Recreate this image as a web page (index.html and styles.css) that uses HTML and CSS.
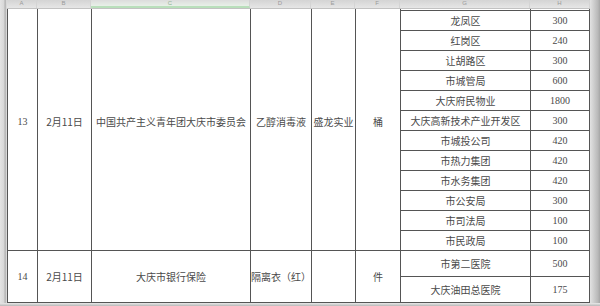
FILE: index.html
```html
<!DOCTYPE html>
<html lang="zh">
<head>
<meta charset="utf-8">
<title>物资捐赠表</title>
<link rel="stylesheet" href="styles.css">
</head>
<body>
<div class="window">
  <div class="main">
    <div class="gutter"></div>
    <div class="sheet">
      <div class="colhead">
        <span class="ch ch-a">A</span><span class="ch ch-b">B</span><span class="ch ch-c active">C</span><span class="ch ch-d">D</span><span class="ch ch-e">E</span><span class="ch ch-f">F</span><span class="ch ch-g">G</span><span class="ch ch-h">H</span>
      </div>
      <div class="viewport">
        <table class="grid">
          <colgroup>
            <col class="w-a"><col class="w-b"><col class="w-c"><col class="w-d"><col class="w-e"><col class="w-f"><col class="w-g"><col class="w-h">
          </colgroup>
          <tbody>
            <tr class="sub first">
              <td rowspan="13" class="num">13</td>
              <td rowspan="13">2月11日</td>
              <td rowspan="13">中国共产主义青年团大庆市委员会</td>
              <td rowspan="13">乙醇消毒液</td>
              <td rowspan="13">盛龙实业</td>
              <td rowspan="13">桶</td>
              <td></td><td class="num"></td>
            </tr>
            <tr class="sub"><td>龙凤区</td><td class="num">300</td></tr>
            <tr class="sub"><td>红岗区</td><td class="num">240</td></tr>
            <tr class="sub"><td>让胡路区</td><td class="num">300</td></tr>
            <tr class="sub"><td>市城管局</td><td class="num">600</td></tr>
            <tr class="sub"><td>大庆府民物业</td><td class="num">1800</td></tr>
            <tr class="sub"><td>大庆高新技术产业开发区</td><td class="num">300</td></tr>
            <tr class="sub"><td>市城投公司</td><td class="num">420</td></tr>
            <tr class="sub"><td>市热力集团</td><td class="num">420</td></tr>
            <tr class="sub"><td>市水务集团</td><td class="num">420</td></tr>
            <tr class="sub"><td>市公安局</td><td class="num">300</td></tr>
            <tr class="sub"><td>市司法局</td><td class="num">100</td></tr>
            <tr class="sub"><td>市民政局</td><td class="num">100</td></tr>
            <tr class="sub tall">
              <td rowspan="2" class="num">14</td>
              <td rowspan="2">2月11日</td>
              <td rowspan="2">大庆市银行保险</td>
              <td rowspan="2">隔离衣（红）</td>
              <td rowspan="2"></td>
              <td rowspan="2">件</td>
              <td>市第二医院</td><td class="num">500</td>
            </tr>
            <tr class="sub tall"><td>大庆油田总医院</td><td class="num">175</td></tr>
          </tbody>
        </table>
      </div>
    </div>
    <div class="edge"></div>
  </div>
  <div class="bottom"></div>
</div>
</body>
</html>
```
FILE: styles.css
```css
* { box-sizing: border-box; }
html, body { margin: 0; padding: 0; }
body {
  width: 600px;
  height: 306px;
  overflow: hidden;
  background: #d6d6d6;
  font-family: "Liberation Serif", "Noto Sans CJK SC", serif;
  color: #333;
}
.window {
  display: flex;
  flex-direction: column;
  width: 600px;
  height: 306px;
}
.main {
  display: flex;
  height: 303px;
}
.gutter {
  width: 7px;
  flex: none;
  background: linear-gradient(to right, #e4e4e4 0, #d8d8d8 4px, #b0b0b0 5px, #c4c4c4 6px, #ececec 7px);
}
.sheet {
  width: 583px;
  flex: none;
  display: flex;
  flex-direction: column;
  background: #fff;
}
.colhead {
  height: 9px;
  flex: none;
  display: flex;
  overflow: hidden;
  background: linear-gradient(to bottom, #d4d4d4, #e6e6e6);
  border-bottom: 1px solid #c2c2c2;
}
.ch {
  flex: none;
  font-family: "Liberation Sans", sans-serif;
  font-size: 6px;
  line-height: 7px;
  color: #9a9a9a;
  text-align: center;
  border-right: 1px solid #d4d4d4;
}
.ch.active {
  background: linear-gradient(to bottom, #dcdcdc, #e8f0e8);
  border-bottom: 2px solid #b9dfbb;
  color: #8fb593;
}
.ch-a { width: 30px; }
.ch-b { width: 54px; }
.ch-c { width: 159px; }
.ch-d { width: 61px; }
.ch-e { width: 44px; }
.ch-f { width: 45px; }
.ch-g { width: 130px; }
.ch-h { width: 60px; }
.viewport {
  flex: 1;
  overflow: hidden;
  background: #fff;
}
.grid {
  table-layout: fixed;
  border-collapse: collapse;
  width: 583px;
  margin-top: -16px;
  font-size: 10px;
}
.w-a { width: 30px; }
.w-b { width: 54px; }
.w-c { width: 159px; }
.w-d { width: 61px; }
.w-e { width: 44px; }
.w-f { width: 45px; }
.w-g { width: 130px; }
.w-h { width: 59px; }
.grid td {
  border: 1px solid #555;
  padding: 0;
  text-align: center;
  vertical-align: middle;
  white-space: nowrap;
  overflow: hidden;
  line-height: 12px;
  font-family: "Noto Sans CJK SC", sans-serif;
  color: #4a4a4a;
}
.grid td.num {
  font-family: "Liberation Serif", "Noto Sans CJK SC", serif;
  font-size: 10px;
}
.sub { height: 20px; }
.sub.first { height: 17px; }
.sub.tall { height: 26px; }
.edge {
  flex: 1;
  background: linear-gradient(to right, #e2e2e2 0, #cdcdcd 4px, #b8b8b8 8px, #a5a5a5 10px);
}
.bottom {
  flex: 1;
  background: linear-gradient(to bottom, #e9e9e9, #b8b8b8);
}
```
